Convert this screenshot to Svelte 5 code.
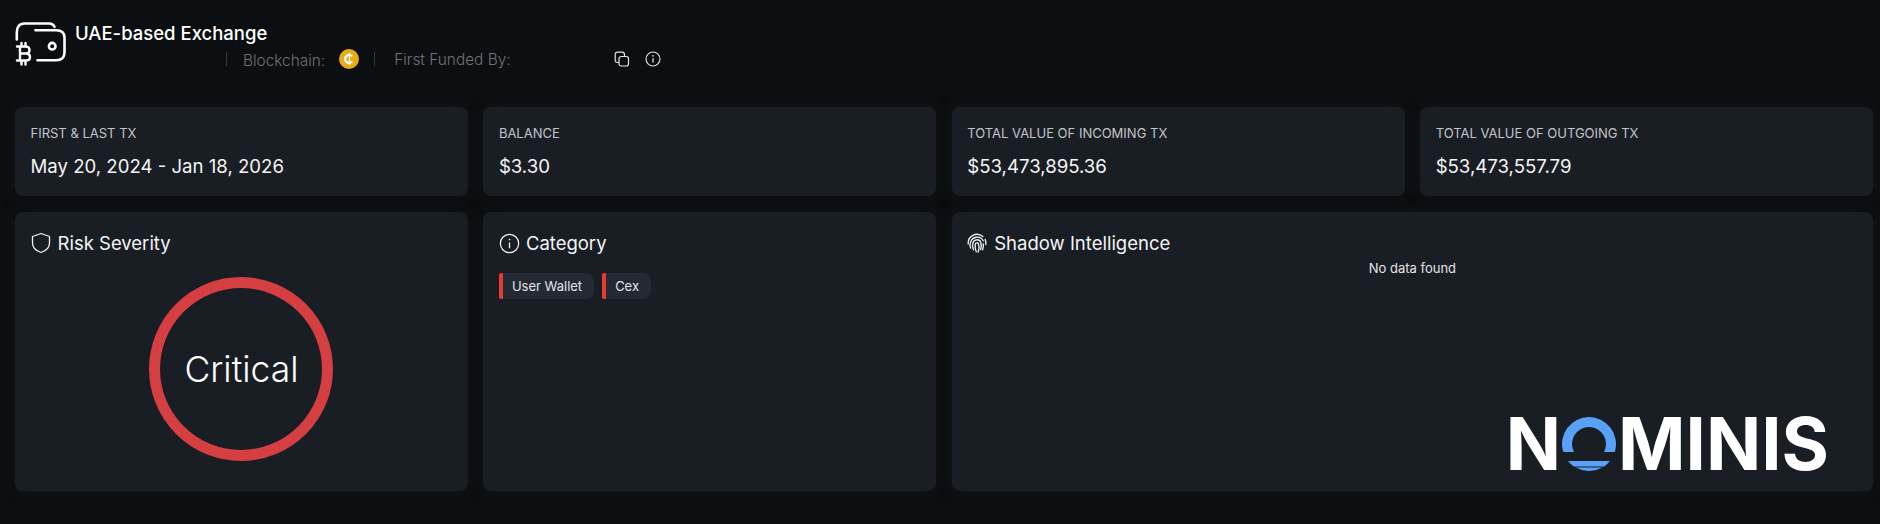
<script>
  const stats = [
    { label: 'FIRST & LAST TX', value: 'May 20, 2024 - Jan 18, 2026' },
    { label: 'BALANCE', value: '$3.30' },
    { label: 'TOTAL VALUE OF INCOMING TX', value: '$53,473,895.36' },
    { label: 'TOTAL VALUE OF OUTGOING TX', value: '$53,473,557.79' }
  ];
  const tags = ['User Wallet', 'Cex'];
</script>

<div class="page">
  <header class="head">
    <svg class="wallet" viewBox="-1.5 -0.5 51 45" width="51" height="45" fill="none" stroke="#fff" stroke-width="2.6" stroke-linecap="round" stroke-linejoin="round">
      <path d="M0.3 17 V10 Q0.3 1 8 1 H33 Q36.5 1 38 4.3" />
      <path d="M19 7.7 H39.7 Q48 7.7 48 15 V30 Q48 37.7 39.7 37.7 H21" />
      <circle cx="35.7" cy="23.7" r="3.3" />
      <path d="M0.5 24 H9 Q13 24 13 27.5 Q13 31 9.5 31 Q13.5 31 13.5 34.7 Q13.5 38 9 38 H0.5 M3.5 24 V38 M3.5 31 H9.5 M5 20.5 V24 M9 20.5 V24 M5 38 V42 M9 38 V42" stroke-width="2.4" />
    </svg>
    <div class="head-text">
      <h1>UAE-based Exchange</h1>
      <div class="meta">
        <span class="sep"></span>
        <span class="meta-label chain">Blockchain:</span>
        <span class="coin">
          <svg viewBox="0 0 20 20" width="20" height="20">
            <circle cx="10" cy="10" r="10" fill="#e9ab17" />
            <path d="M13.2 7.4 A4 4 0 1 0 13.2 12.6" fill="none" stroke="#fff" stroke-width="2.2" />
            <path d="M10.5 4 V16" stroke="#fff" stroke-width="1.2" />
          </svg>
        </span>
        <span class="sep second"></span>
        <span class="meta-label funded">First Funded By:</span>
        <svg class="copy" viewBox="0 0 16 16" width="16" height="16" fill="none" stroke="#e4e4e4" stroke-width="1.2">
          <rect x="5" y="5.5" width="9.5" height="9.5" rx="2.2" />
          <path d="M5 11.5 H3.5 Q1.2 11.5 1.2 9 V3.5 Q1.2 1.2 3.5 1.2 H8 Q10.5 1.2 10.5 3.5 V5.5" />
        </svg>
        <svg class="info" viewBox="0 0 16 16" width="16" height="16" fill="none" stroke="#e4e4e4" stroke-width="1.1">
          <circle cx="8" cy="8" r="7" />
          <path d="M8 7.2 V11.5" stroke-width="1.3" />
          <circle cx="8" cy="4.9" r="0.8" fill="#e4e4e4" stroke="none" />
        </svg>
      </div>
    </div>
  </header>

  <section class="grid">
    {#each stats as s}
      <div class="card stat">
        <div class="stat-label">{s.label}</div>
        <div class="stat-value">{s.value}</div>
      </div>
    {/each}

    <div class="card panel">
      <h2>
        <svg class="shield" viewBox="0 0 20 22" width="20" height="22" fill="none" stroke="#f2f2f2" stroke-width="1.3" stroke-linejoin="round">
          <path d="M10 1.5 L18.5 4.5 V11 C18.5 16 14.5 19 10 20.5 C5.5 19 1.5 16 1.5 11 V4.5 Z" />
        </svg>
        Risk Severity
      </h2>
      <div class="ring-wrap">
        <div class="ring">Critical</div>
      </div>
    </div>

    <div class="card panel">
      <h2>
        <svg viewBox="0 0 22 22" width="21" height="21" fill="none" stroke="#f2f2f2" stroke-width="1.3">
          <circle cx="11" cy="11" r="9.6" />
          <path d="M11 10 V16" stroke-width="1.4" />
          <circle cx="11" cy="6.8" r="0.9" fill="#f2f2f2" stroke="none" />
        </svg>
        Category
      </h2>
      <div class="tags">
        {#each tags as t}
          <span class="tag">{t}</span>
        {/each}
      </div>
    </div>

    <div class="card panel wide">
      <h2>
        <svg class="print" viewBox="0 0 20 20" width="20" height="20" fill="none" stroke="#f2f2f2" stroke-width="1.35" stroke-linecap="round">
          <path d="M1.2 11 A8.8 8.8 0 0 1 15.8 3.6" />
          <path d="M3.6 15 A7 7 0 0 1 3.7 9 A6.8 6.8 0 0 1 16.2 7.8" />
          <path d="M18.2 6.5 A10 10 0 0 1 18.8 11.5" />
          <path d="M6.4 16.8 A9 9 0 0 1 5.9 10 A4.2 4.2 0 0 1 13.9 9.5 A12 12 0 0 1 13.6 16.5" />
          <path d="M9.3 18.8 A12 12 0 0 1 8.3 11 A1.8 1.8 0 0 1 11.6 10.8 A14 14 0 0 1 11.2 19" />
          <path d="M16.3 11 A16 16 0 0 1 15.6 16.8" />
        </svg>
        Shadow Intelligence
      </h2>
      <p class="empty">No data found</p>
      <div class="logo">
        <span>N</span>
        <svg class="logo-o" viewBox="0 0 54 54" width="54" height="54">
          <path d="M1.2 35 A27 27 0 1 1 52.8 35 H42 A17 17 0 1 0 12 35 Z" fill="#58a1f7" />
          <path d="M6 44 H48 A27 27 0 0 1 42 49.5 H12 A27 27 0 0 1 6 44 Z" fill="#58a1f7" />
          <path d="M13.7 50.5 H40.3 A27 27 0 0 1 13.7 50.5 Z" fill="#58a1f7" />
        </svg>
        <span class="rest">MINIS</span>
      </div>
    </div>
  </section>
</div>

<style>
  :global(body) {
    background: #0b0f11;
    margin: 0;
    font-family: Inter, "Liberation Sans", sans-serif;
    color: #fff;
  }

  .page {
    padding: 21px 7px 0 15px;
    height: 503px;
  }

  .head {
    display: flex;
    align-items: flex-start;
    height: 86px;
  }

  .wallet {
    margin-top: 1px;
    flex: none;
  }

  .head-text {
    margin-left: 9px;
  }

  h1 {
    margin: 0;
    font-size: 18.5px;
    font-weight: 500;
    line-height: 24px;
  }

  .meta {
    display: flex;
    align-items: center;
    margin: 4px 0 0 151px;
    height: 20px;
  }

  .sep {
    width: 1px;
    height: 14px;
    background: #33363a;
  }

  .meta-label {
    font-size: 15.4px;
    color: #6f7276;
    font-weight: 300;
  }

  .chain {
    margin-left: 16px;
    padding-top: 3px;
  }

  .coin {
    margin-left: 14px;
    display: flex;
  }

  .sep.second {
    margin-left: 15px;
  }

  .funded {
    margin-left: 19px;
  }

  .copy {
    margin-left: 103px;
  }

  .info {
    margin-left: 15px;
  }

  .grid {
    display: grid;
    grid-template-columns: repeat(4, 1fr);
    grid-template-rows: 89px 279px;
    gap: 16px 15.5px;
  }

  .card {
    background: #191e25;
    border-radius: 8px;
    box-shadow: 0 0 14px #14161a;
    box-sizing: border-box;
  }

  .stat {
    padding: 18px 15.5px;
  }

  .stat-label {
    font-size: 13px;
    line-height: 16px;
    color: #c2c4c7;
  }

  .stat-value {
    font-size: 18.6px;
    line-height: 24px;
    margin-top: 13px;
    font-weight: 400;
    color: #f4f4f4;
  }

  .panel {
    padding: 20px 15.5px;
    position: relative;
  }

  .wide {
    grid-column: span 2;
  }

  h2 {
    display: flex;
    align-items: center;
    gap: 6px;
    margin: 0;
    font-size: 18.5px;
    font-weight: 400;
    line-height: 22px;
    color: #f4f4f4;
  }

  .shield,
  .print {
    margin-right: 1px;
  }

  .ring-wrap {
    display: flex;
    justify-content: center;
    margin-top: 23px;
  }

  .ring {
    width: 184px;
    height: 184px;
    box-sizing: border-box;
    border: 11px solid #d63f41;
    border-radius: 50%;
    display: flex;
    align-items: center;
    justify-content: center;
    font-size: 35.5px;
    font-weight: 300;
  }

  .tags {
    display: flex;
    gap: 8px;
    margin-top: 19px;
  }

  .tag {
    background: #232a34;
    border-left: 4px solid #e83a30;
    border-radius: 2px 8px 8px 2px;
    padding: 0 12px 0 9px;
    height: 26px;
    line-height: 26px;
    font-size: 13px;
    color: #e3e4e6;
  }

  .empty {
    margin: 5px 0 0;
    text-align: center;
    font-size: 13px;
    line-height: 18px;
    color: #e3e4e6;
  }

  .logo {
    position: absolute;
    left: 554px;
    top: 205px;
    display: flex;
    align-items: center;
    gap: 1px;
    font-size: 72.5px;
    line-height: 54px;
    font-weight: 700;
    color: #fff;
  }

  .logo-o {
    flex: none;
  }

  .rest {
    margin-left: 1px;
  }
</style>
